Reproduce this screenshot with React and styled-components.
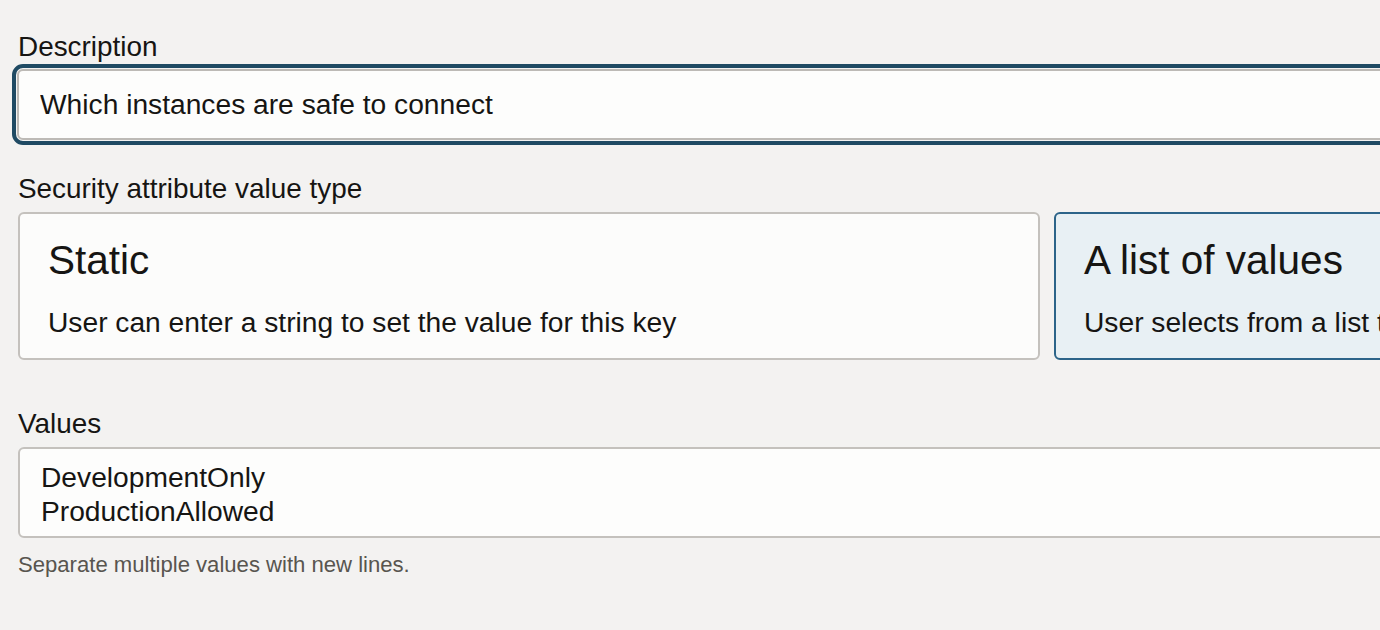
import React from 'react'
import styled, { createGlobalStyle } from 'styled-components';

const GlobalStyle = createGlobalStyle`
    html, body {
        margin: 0;
        padding: 0;
        overflow: hidden;
        background: #f3f2f1;
    }
    body {
        font-family: "Liberation Sans", Arial, sans-serif;
        color: #161513;
    }
`;

const tipos = [
    { id: "static", titulo: "Static", texto: "User can enter a string to set the value for this key" },
    { id: "list", titulo: "A list of values", texto: "User selects from a list that you define for this key" }
];

export default function App(){
    const selecionado = "list";
    return(
        <>
            <GlobalStyle />
            <Pagina>
                <Campo>
                    <Rotulo htmlFor="descricao">Description</Rotulo>
                    <Entrada id="descricao" type="text" readOnly focado value="Which instances are safe to connect" />
                </Campo>

                <Campo espaco={33}>
                    <Rotulo as="div">Security attribute value type</Rotulo>
                    <Cartoes>
                        {tipos.map((t) => (
                            <Cartao key={t.id} ativo={t.id === selecionado}>
                                <h3>{t.titulo}</h3>
                                <p>{t.texto}</p>
                            </Cartao>
                        ))}
                    </Cartoes>
                </Campo>

                <Campo espaco={48}>
                    <Rotulo htmlFor="valores">Values</Rotulo>
                    <AreaTexto id="valores" readOnly value={"DevelopmentOnly\nProductionAllowed"} />
                    <Ajuda>Separate multiple values with new lines.</Ajuda>
                </Campo>
            </Pagina>
        </>
    );
}

const Pagina = styled.div`
    width: 2060px;
    padding: 31px 0 0 18px;
    box-sizing: border-box;
`;
const Campo = styled.div`
    display: flex;
    flex-direction: column;
    margin-top: ${(p) => p.espaco || 0}px;
`;
const Rotulo = styled.label`
    font-size: 27.9px;
    line-height: 32px;
    margin-bottom: 6px;
`;
const Entrada = styled.input`
    width: 100%;
    height: 71px;
    box-sizing: border-box;
    border: 2px solid #bdbab6;
    border-radius: 6px;
    background: #fdfdfc;
    padding: 0 21px;
    margin-left: -1px;
    font-family: "Liberation Sans", Arial, sans-serif;
    font-size: 28.2px;
    color: #161513;
    outline: ${(p) => p.focado ? "4.5px solid #1f4a63" : "none"};
    outline-offset: 1px;
`;
const Cartoes = styled.div`
    display: grid;
    grid-template-columns: 1022px 1022px;
    gap: 14px;
    margin-top: 1px;
`;
const Cartao = styled.div`
    height: 148px;
    box-sizing: border-box;
    border: 2px solid ${(p) => p.ativo ? "#2c6489" : "#c4c1bd"};
    border-radius: 6px;
    background: ${(p) => p.ativo ? "#e8f0f4" : "#fcfcfb"};
    padding: 23px 28px 0;
    h3{
        margin: 0;
        font-weight: normal;
        font-size: 40.5px;
        line-height: 46px;
        white-space: nowrap;
    }
    p{
        margin: 23px 0 0;
        font-size: 28.2px;
        line-height: 32px;
        white-space: nowrap;
    }
`;
const AreaTexto = styled.textarea`
    width: 100%;
    height: 91px;
    box-sizing: border-box;
    margin: 1px 0 0;
    border: 2px solid #c4c1bd;
    border-radius: 6px;
    background: #fdfdfc;
    padding: 11px 21px 0;
    font-family: "Liberation Sans", Arial, sans-serif;
    font-size: 28.2px;
    line-height: 34px;
    color: #161513;
    resize: none;
    overflow: hidden;
    outline: none;
`;
const Ajuda = styled.div`
    margin-top: 14px;
    font-size: 22.1px;
    line-height: 26px;
    color: #58554f;
`;
